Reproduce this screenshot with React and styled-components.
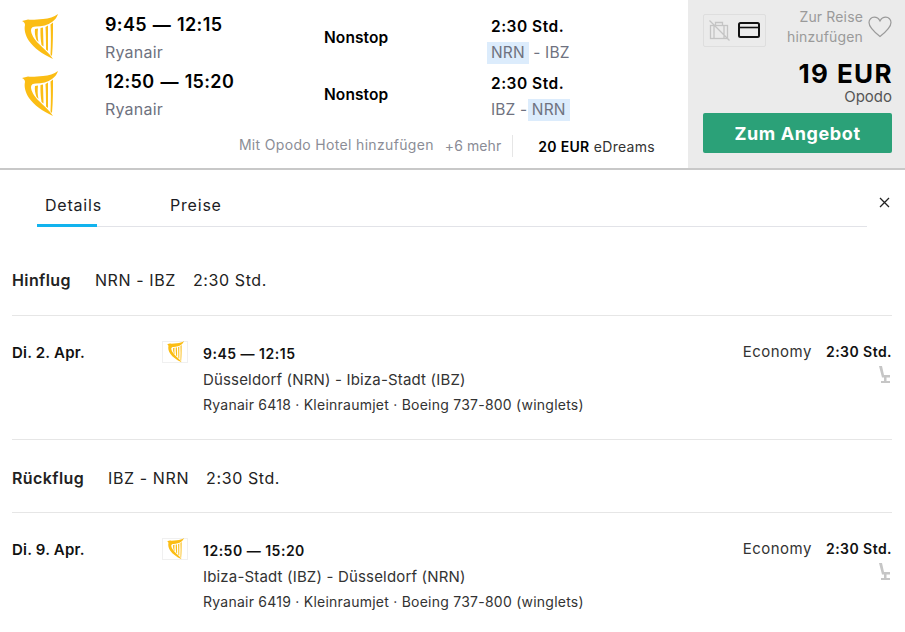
import React from "react";
import styled, {createGlobalStyle} from "styled-components";

const GlobalStyle = createGlobalStyle`
  html, body {
    margin: 0;
    padding: 0;
    background: #fff;
    font-family: "Inter", "Liberation Sans", sans-serif;
    color: #0a0a0a;
  }
  * {
    box-sizing: border-box;
  }
`;

const Harp = ({size}) => (
    <svg width={size} height={size * 1.25} viewBox="0 0 36 45">
        <path fill="#fbbd14" d="M36 0C32 3 27 4.500 21 5C15 5.500 10 6 6 5.500L0 7C2 8 3 9 3 11C2 15 3 21 7 27C12 34 20 40 31 45C28 40 22 35 17 30C12 25 9 20 9 16C9 13.500 11 12.500 14 12.500C20 12.500 26 11 30 8C33 6 35 3 36 0Z"/>
        <path fill="#fbbd14" d="M13 15L16 14.500C15.500 19 15.500 24 16.500 28L14.500 26C13 22 12.500 18 13 15Z"/>
        <path fill="#fbbd14" d="M18.500 14L21 13.500L21.500 32.500L19.500 31C18.500 25 18.300 19 18.500 14Z"/>
        <path fill="#fbbd14" d="M23.500 13L26 11.500L26 37L24 35.500C24 27 23.800 19 23.500 13Z"/>
        <path fill="#fbbd14" d="M28.500 10.500L31 8.500C31 19 31 30 30 42L28.500 40.500C29 30 29 20 28.500 10.500Z"/>
    </svg>
);

const legs = [
    {times: "9:45 — 12:15", from: "NRN", to: "IBZ", mark: "from"},
    {times: "12:50 — 15:20", from: "IBZ", to: "NRN", mark: "to"},
];

const segments = [
    {
        label: "Hinflug",
        route: "NRN - IBZ",
        day: "Di. 2. Apr.",
        times: "9:45 — 12:15",
        cities: "Düsseldorf (NRN) - Ibiza-Stadt (IBZ)",
        flight: "Ryanair 6418 · Kleinraumjet · Boeing 737-800 (winglets)",
    },
    {
        label: "Rückflug",
        route: "IBZ - NRN",
        day: "Di. 9. Apr.",
        times: "12:50 — 15:20",
        cities: "Ibiza-Stadt (IBZ) - Düsseldorf (NRN)",
        flight: "Ryanair 6419 · Kleinraumjet · Boeing 737-800 (winglets)",
    },
];

export default function App() {
    return (
        <>
            <GlobalStyle/>
            <Page>
                <Result>
                    <Flights>
                        {legs.map((leg) => (
                            <Leg key={leg.times}>
                                <LogoCell><Harp size={36}/></LogoCell>
                                <TimeCell>
                                    <Times>{leg.times}</Times>
                                    <Carrier>Ryanair</Carrier>
                                </TimeCell>
                                <Stops>Nonstop</Stops>
                                <RouteCell>
                                    <Duration>2:30 Std.</Duration>
                                    <Route>
                                        <Airport $marked={leg.mark === "from"}>{leg.from}</Airport>
                                        {" - "}
                                        <Airport $marked={leg.mark === "to"}>{leg.to}</Airport>
                                    </Route>
                                </RouteCell>
                            </Leg>
                        ))}
                        <Extras>
                            <HotelLink>Mit Opodo Hotel hinzufügen</HotelLink>
                            <More>+6 mehr</More>
                            <OtherPrice><b>20 EUR</b> eDreams</OtherPrice>
                        </Extras>
                    </Flights>
                    <PricePanel>
                        <PanelTop>
                            <FeeBox>
                                <svg width="21" height="21" viewBox="0 0 21 21" fill="none" stroke="#c4c4c4" strokeWidth="1.300">
                                    <rect x="1.500" y="5.500" width="17" height="13"/>
                                    <path d="M6.500 5.500V2.500h7v3M5 5.500v13M15 5.500v13M0.500 0.500l20 20"/>
                                </svg>
                                <svg width="22" height="16" viewBox="0 0 22 16" fill="none" stroke="#111" strokeWidth="2">
                                    <rect x="1" y="1" width="20" height="14" rx="1.500"/>
                                    <path d="M1 5.500h20" strokeWidth="1.600"/>
                                </svg>
                            </FeeBox>
                            <TripAdd>Zur Reise<br/>hinzufügen</TripAdd>
                            <svg width="24" height="22" viewBox="0 0 24 22" fill="none" stroke="#9a9a9a" strokeWidth="1.200">
                                <path d="M12 20.500C5 15 1 11 1 6.500C1 3.500 3.300 1.200 6.200 1.200C8.500 1.200 10.800 2.600 12 5C13.200 2.600 15.500 1.200 17.800 1.200C20.700 1.200 23 3.500 23 6.500C23 11 19 15 12 20.500Z"/>
                            </svg>
                        </PanelTop>
                        <Price>19 EUR</Price>
                        <Provider>Opodo</Provider>
                        <DealButton>Zum Angebot</DealButton>
                    </PricePanel>
                </Result>

                <Details>
                    <TabRow>
                        <Tabs>
                            <Tab $active>Details</Tab>
                            <Tab>Preise</Tab>
                        </Tabs>
                        <Close>
                            <svg width="11" height="11" viewBox="0 0 11 11" stroke="#222" strokeWidth="1.300">
                                <path d="M1 1l9 9M10 1l-9 9"/>
                            </svg>
                        </Close>
                    </TabRow>

                    {segments.map((seg, i) => (
                        <Segment key={seg.label} $first={i === 0}>
                            <SegmentHead $first={i === 0}>
                                <SegmentLabel>{seg.label}</SegmentLabel>
                                <SegmentInfo>{seg.route}</SegmentInfo>
                                <SegmentInfo>2:30 Std.</SegmentInfo>
                            </SegmentHead>
                            <SegmentBody>
                                <Day>{seg.day}</Day>
                                <SmallLogo><Harp size={17}/></SmallLogo>
                                <SegmentText>
                                    <SegmentTimes>{seg.times}</SegmentTimes>
                                    <Cities>{seg.cities}</Cities>
                                    <FlightInfo>{seg.flight}</FlightInfo>
                                </SegmentText>
                                <CabinCol>
                                    <CabinRow>
                                        <Cabin>Economy</Cabin>
                                        <CabinTime>2:30 Std.</CabinTime>
                                    </CabinRow>
                                    <SeatIcon width="13" height="17" viewBox="0 0 13 17" fill="#c6c6c6">
                                        <path d="M1 0h3l2 9h6v2.500H4L1 0ZM6 11.500h2.500V15H12v2H3v-2h3V11.500Z"/>
                                    </SeatIcon>
                                </CabinCol>
                            </SegmentBody>
                        </Segment>
                    ))}
                </Details>
            </Page>
        </>
    );
}

const Page = styled.div`
  width: 905px;
  height: 632px;
  overflow: hidden;
  background: #fff;
`;

const Result = styled.div`
  display: flex;
  height: 170px;
  border-bottom: 2px solid #c8c8c8;
`;

const Flights = styled.div`
  width: 688px;
  display: flex;
  flex-direction: column;
  padding-top: 11px;
`;

const Leg = styled.div`
  display: grid;
  grid-template-columns: 105px 219px 167px 1fr;
  height: 57px;
  align-items: center;
`;

const LogoCell = styled.div`
  padding-left: 22px;
  display: flex;
  align-self: start;
  padding-top: 3px;
`;

const TimeCell = styled.div`
  display: flex;
  flex-direction: column;
  gap: 6px;
  padding-bottom: 3px;
`;

const Times = styled.div`
  font-size: 18px;
  font-weight: 600;
  line-height: 22px;
  color: #000;
  letter-spacing: 0.35px;
  word-spacing: 1px;
`;

const Carrier = styled.div`
  font-size: 16px;
  line-height: 20px;
  color: #6f7280;
  letter-spacing: 0.2px;
`;

const Stops = styled.div`
  font-size: 15.500px;
  font-weight: 600;
  color: #000;
  padding-bottom: 4px;
  letter-spacing: 0.1px;
`;

const RouteCell = styled.div`
  display: flex;
  flex-direction: column;
  gap: 4px;
  padding-top: 1px;
`;

const Duration = styled.div`
  font-size: 15.500px;
  font-weight: 600;
  line-height: 22px;
  color: #000;
  letter-spacing: 0.5px;
`;

const Route = styled.div`
  font-size: 15.500px;
  line-height: 22px;
  color: #6f7280;
  white-space: pre;
  letter-spacing: 0.15px;
`;

const Airport = styled.span`
  display: inline-block;
  padding: 0 ${(p) => (p.$marked ? "4px" : "0")};
  margin-left: ${(p) => (p.$marked ? "-4px" : "0")};
  background: ${(p) => (p.$marked ? "#dcecfc" : "transparent")};
`;

const Extras = styled.div`
  display: flex;
  align-items: center;
  justify-content: flex-end;
  margin-top: 10px;
  padding-right: 33px;
  height: 22px;
  color: #8a8c96;
`;

const HotelLink = styled.span`
  font-size: 14px;
  color: #8b8d96;
  position: relative;
  top: -2px;
  letter-spacing: 0.33px;
`;

const More = styled.span`
  font-size: 14px;
  margin-left: 11px;
  padding-right: 11px;
  border-right: 1px solid #e6e6e6;
  line-height: 22px;
  letter-spacing: 0.1px;
`;

const OtherPrice = styled.span`
  font-size: 14px;
  color: #333;
  margin-left: 25px;
  letter-spacing: 0.3px;
  padding-top: 1px;
  b {
    font-weight: 600;
    color: #000;
  }
`;

const PricePanel = styled.div`
  width: 217px;
  background: #ebebeb;
  padding: 7px 13px 0 15px;
  display: flex;
  flex-direction: column;
  align-items: flex-end;
`;

const PanelTop = styled.div`
  display: flex;
  align-items: center;
  justify-content: space-between;
  width: 100%;
`;

const FeeBox = styled.div`
  width: 63px;
  height: 33px;
  margin-top: 6px;
  border: 1px solid #dedede;
  border-radius: 2px;
  display: flex;
  align-items: center;
  justify-content: space-between;
  padding: 0 5px;
`;

const TripAdd = styled.div`
  margin-left: auto;
  text-align: right;
  font-size: 14px;
  line-height: 20px;
  color: #9a9a9a;
  margin-right: 5px;
  letter-spacing: 0.15px;
`;

const Price = styled.div`
  font-size: 26px;
  font-weight: 700;
  color: #000;
  line-height: 26px;
  margin-top: 14px;
  letter-spacing: 1.400px;
  margin-right: -1px;
`;

const Provider = styled.div`
  font-size: 15px;
  line-height: 18px;
  margin-top: 1px;
  color: #555;
`;

const DealButton = styled.button`
  width: 189px;
  height: 40px;
  margin-top: 7px;
  border: none;
  border-radius: 2px;
  background: #2ba178;
  color: #fff;
  font-family: inherit;
  font-size: 18px;
  font-weight: 700;
  letter-spacing: 0.6px;
`;

const Details = styled.div`
  padding: 0 13px 0 12px;
`;

const TabRow = styled.div`
  display: flex;
  align-items: flex-start;
  height: 58px;
`;

const Tabs = styled.div`
  margin-left: 25px;
  width: 830px;
  height: 57px;
  display: flex;
  gap: 65px;
  border-bottom: 1px solid #e2e3e8;
  align-items: flex-end;
`;

const Tab = styled.div`
  font-size: 16px;
  line-height: 20px;
  width: 60px;
  white-space: nowrap;
  padding: 0 0 9px 8px;
  margin-bottom: -1px;
  color: #1c1c24;
  letter-spacing: 0.8px;
  border-bottom: 3px solid ${(p) => (p.$active ? "#12b3ee" : "transparent")};
`;

const Close = styled.div`
  margin-left: 12px;
  padding-top: 27px;
  display: flex;
`;

const Segment = styled.section`
  border-top: ${(p) => (p.$first ? "none" : "1px solid #e6e6e6")};
`;

const SegmentHead = styled.div`
  display: flex;
  align-items: center;
  gap: 17px;
  height: ${(p) => (p.$first ? "88px" : "73px")};
  padding-top: ${(p) => (p.$first ? "17px" : "4px")};
  border-bottom: 1px solid #e6e6e6;
`;

const SegmentLabel = styled.div`
  font-size: 16px;
  font-weight: 600;
  color: #222;
  letter-spacing: 0.4px;
  margin-right: 7px;
`;

const SegmentInfo = styled.div`
  font-size: 16px;
  color: #222;
  letter-spacing: 0.6px;
`;

const SegmentBody = styled.div`
  display: flex;
  align-items: flex-start;
  height: 123px;
  padding-top: 25px;
`;

const Day = styled.div`
  width: 150px;
  font-size: 15px;
  font-weight: 600;
  line-height: 24px;
  color: #111;
  letter-spacing: 0.2px;
`;

const SmallLogo = styled.div`
  width: 26px;
  height: 22px;
  border: 1px solid #f0f0f0;
  display: flex;
  align-items: center;
  justify-content: center;
  margin-right: 15px;
`;

const SegmentText = styled.div`
  flex: 1;
  padding-top: 1px;
`;

const SegmentTimes = styled.div`
  font-size: 14px;
  font-weight: 600;
  line-height: 24px;
  color: #111;
  letter-spacing: 0.5px;
`;

const Cities = styled.div`
  font-size: 15px;
  line-height: 25px;
  color: #333;
  margin-top: 1px;
  letter-spacing: 0.17px;
`;

const FlightInfo = styled.div`
  font-size: 14px;
  line-height: 25px;
  color: #333;
  letter-spacing: 0.24px;
`;

const CabinCol = styled.div`
  display: flex;
  flex-direction: column;
  align-items: flex-end;
`;

const CabinRow = styled.div`
  display: flex;
  gap: 14px;
  line-height: 22px;
  font-size: 15px;
`;

const Cabin = styled.span`
  color: #333;
  letter-spacing: 0.5px;
`;

const CabinTime = styled.span`
  font-size: 14px;
  font-weight: 600;
  color: #111;
  letter-spacing: 0.45px;
`;

const SeatIcon = styled.svg`
  margin-top: 3px;
  margin-right: 1px;
`;
